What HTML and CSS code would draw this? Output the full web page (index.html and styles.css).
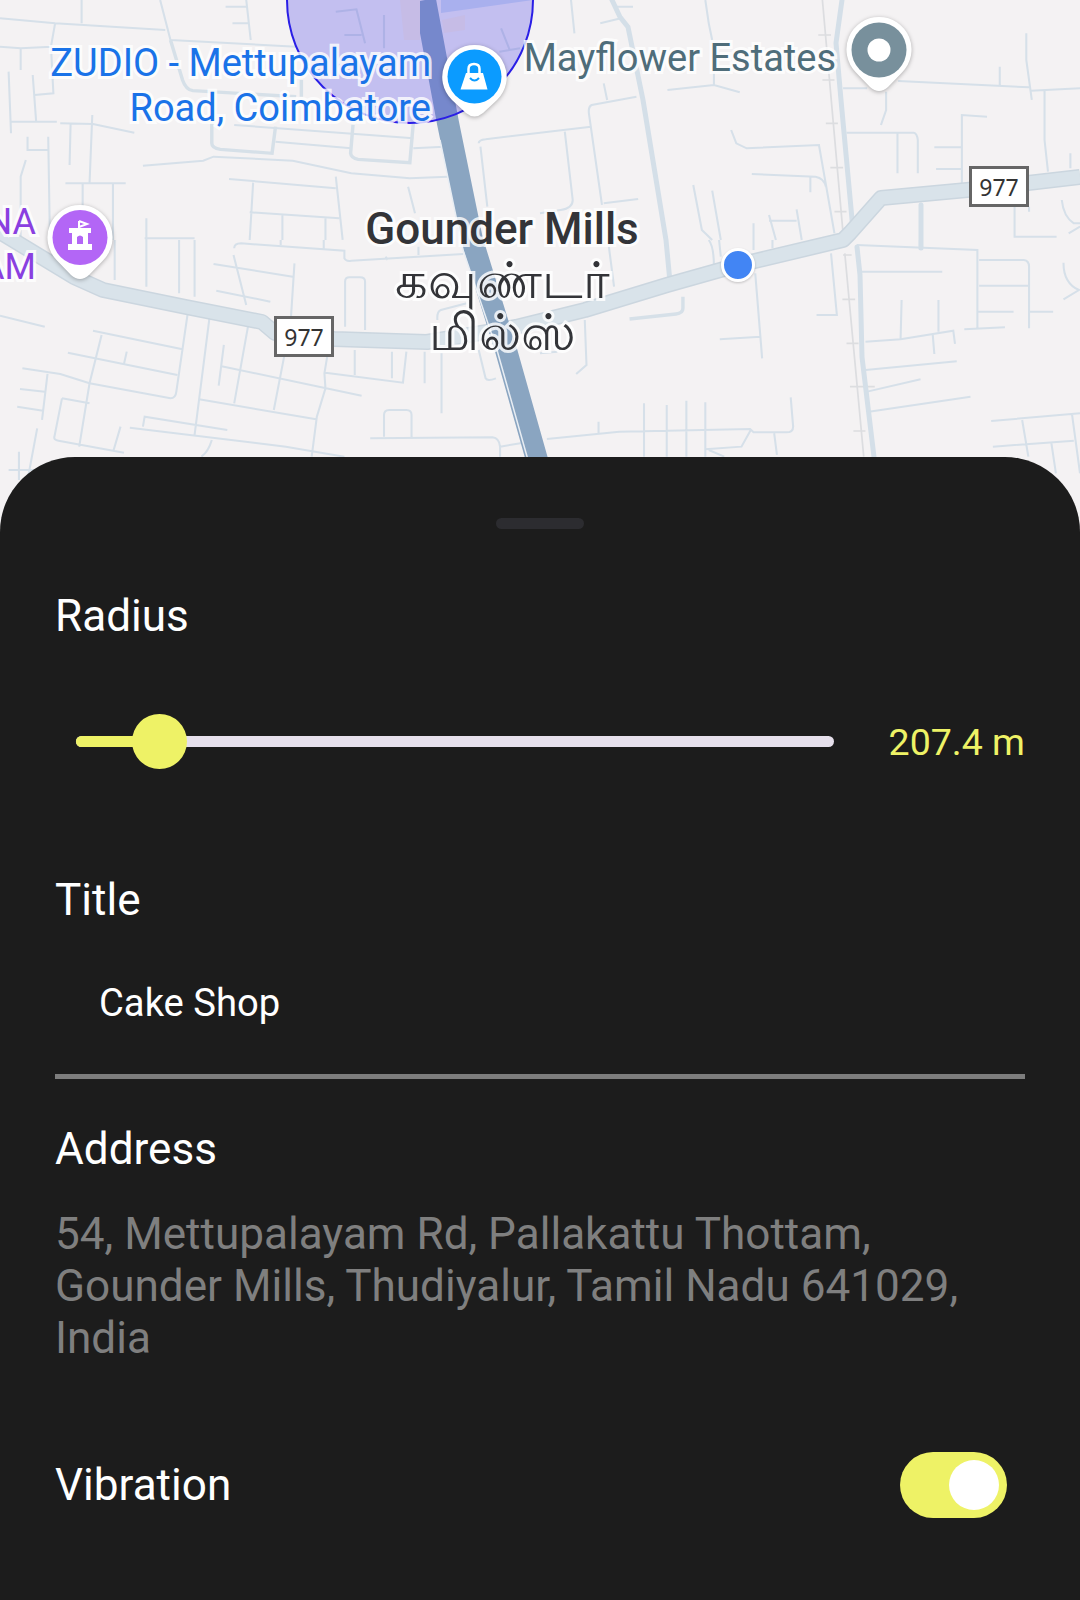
FILE: index.html
```html
<!DOCTYPE html>
<html lang="en">
<head>
<meta charset="utf-8">
<title>Geofence</title>
<link rel="stylesheet" href="styles.css">
</head>
<body>
<main class="app">
  <section class="map">
    <svg class="map-art" viewBox="0 0 1080 540" width="1080" height="540" aria-hidden="true">
      <g transform="scale(.3444 .3333)" class="minor">
        <path d="M0 55L160 70L480 90M237 0V70M160 70L148 140L155 280L100 285M0 140L60 145L150 140M60 145V210M25 215L32 400M95 225L105 365M30 365H165M175 370L270 372L390 398M268 345L260 550M205 372L202 495M80 410V450H140M140 410L145 720M75 480L60 530V720M190 550H365M240 550V620M328 550V720M465 0L495 120M495 120L860 140M655 20H715M675 70H720M715 0L728 120M680 375L1200 415M800 425L1020 445M415 497L590 482L620 470L850 482L1020 520L1190 535L1300 530M1200 445L1290 440M665 537L975 565M735 548L725 720M725 637L985 655M975 530L995 720M820 645V720M945 655V720M425 655V720M1185 560L1205 640M1390 430Q1390 420 1410 418L1568 398M1395 440L1415 620M420 715H565"/>
        <path class="wide" d="M495 120L530 240Q540 270 560 272L860 290M875 240V290M615 370V430Q615 445 640 448L790 460L800 380M1025 375L1018 460Q1020 475 1040 478L1190 488L1200 370"/>
      </g>
      <g transform="translate(540 0) scale(.3444 .3333)" class="minor">
        <path d="M90 0L100 100M175 70L235 55M270 20H215M480 0L490 70L500 120M370 270L505 255L580 277M505 220V255M185 250L195 300M280 290L150 315Q140 320 142 340L180 615M0 398L148 380M72 395L95 600Q95 625 60 630L0 640M185 610L285 597M555 390L570 430L600 445L810 435L855 700M615 522L800 530Q825 535 830 560M785 530V577M445 555L470 690L500 720M500 572L525 720M620 670V720M665 645L685 720M665 662H745M745 628L760 720M880 265H950M1040 243L1420 262M1335 200V260M1412 100V180L1428 300M1425 272L1568 265M1465 272V420L1475 515M1005 275V330L990 375M890 398H1085Q1095 400 1097 420V520M1038 400V520M1298 350L1225 345V550M1145 442H1225M1150 507H1228M1540 460V505M1378 620V710L1500 710M1420 620V635M1515 600Q1520 650 1550 670L1568 670M1535 700L1568 680"/>
        <path class="rail" d="M820 0L880 700M808 105H845M820 240H855M830 370H865M843 503H880M855 635H890"/>
      </g>
      <g transform="translate(0 240) scale(.3444 .3333)" class="minor">
        <path d="M0 227L130 260M270 272L530 328M295 285L260 430L230 620M197 338L515 405M368 335L360 372M65 385L175 402L260 430L495 475Q510 475 512 455L545 220M58 447L130 455M50 500L125 512M138 402L122 540M180 475L260 490M180 475L158 590Q155 600 170 602L360 638M350 560L330 630M108 565L80 720M55 635V720M25 690H100M608 235L565 585M377 563L830 620L1000 650M615 600Q605 635 585 650M415 560L420 530L660 570M650 315L635 437M640 378L1050 467M720 260L680 490M825 350L795 510M578 478L918 538M950 350L942 400L945 445L920 530L905 650M945 398L1170 428L1180 335M1030 330V405M1138 335V415M1233 335V430M1282 340V520M1115 590V525Q1115 510 1130 510H1180Q1195 510 1195 525V595M1075 595L1430 592Q1450 595 1452 620V650M1452 620L1520 608M620 72L850 110M855 70L845 230M678 45L715 195M628 152L785 185M1002 260V125Q1002 112 1015 112H1045Q1060 112 1060 125V270M425 0V140M520 0V160M565 0V170M333 0V120M680 25Q680 10 700 10L1000 32V55Q1005 65 1020 62L1345 42M815 0V15M940 0V25M1120 50L1125 60M1215 20V45M1355 190L1280 210Q1268 215 1270 240M1390 330L1410 415Q1415 425 1440 415"/>
      </g>
      <g transform="translate(540 240) scale(.3444 .3333)" class="minor">
        <path d="M200 20L215 140M490 0Q505 20 505 80M520 0L525 50M620 0V30M675 0V25M130 240L135 375L105 402M0 340L50 335M625 100L645 355M522 298L640 290M845 40L862 225H803M930 95H1168M920 15L1270 30V265M1275 60H1405Q1420 62 1420 80V265M1275 137H1420M1270 215H1375M1232 268L1350 262M1420 215H1490M1050 180L1047 298M1157 180V275M945 305L1047 298L1200 272L1205 312M1140 280L1145 342M945 390L1210 364M950 455L1105 418M955 515L1250 470M1520 68Q1520 130 1565 150L1520 178M1310 543L1568 520M1400 540L1418 650M1315 620L1550 602M1485 610L1498 700M1545 525L1568 700M170 545V580M20 597L230 575L610 567L620 577H715Q735 577 735 560L728 472M302 490V650M368 495V650M425 482V650M480 487V650M480 628L585 620L612 570M680 580L688 645M490 630L535 650"/>
        <path class="wide" d="M415 170V205Q415 220 395 222L260 237M1105 0V30"/>
        <path class="rail" d="M885 40L940 650M880 45H905M878 178H915M890 310H925M900 440H972M910 573H945"/>
      </g>
      <path class="secondary" d="M612 0L620 17L628 27L643 100L666 240L670 282"/>
      <path class="secondary" d="M842 0L836 43L841 100L853 230M857 247L860 275L862 357L874 457"/>
      <path class="secondary" d="M921 205V248"/>
      <path class="primary-edge" d="M-10 226L74 277L103 290L186 307L262 322L275 333L334 339L427 342L516 327L585 310L667 285L738 265L843 240L850 233L881 198L967 190L1080 177"/>
      <path class="primary" d="M-10 226L74 277L103 290L186 307L262 322L275 333L334 339L427 342L516 327L585 310L667 285L738 265L843 240L850 233L881 198L967 190L1080 177"/>
      <path class="highway" d="M425 0L448 123L472 240L506 350L537 460"/>
      <path class="highway-line" d="M440 140L463 250L497 350L528 460"/>
      <circle class="fence" cx="410" cy="0" r="123"/>
      <path class="patch" d="M400 0H420V40H404ZM442 20L465 15V30L444 33Z"/>
      <g class="minor faded" transform="scale(.3444 .3333)">
        <path d="M975 35L1035 28L1060 130M1000 105H1050M1115 45V145M1455 85L1480 150M1450 155L1510 145"/>
      </g>
      <path class="band" d="M441 13L533 0H441Z"/>

      <g class="pin">
        <path d="M474.500 45A32 32 0 0 1 497 100L483 113Q474.500 120 466 113L452 100A32 32 0 0 1 474.500 45Z" class="pin-body"/>
        <circle cx="474.500" cy="76.500" r="27" fill="#0b9bff"/>
        <path d="M466 73H483L487.500 89.500H460.500Z" fill="#fff"/>
        <path d="M468.500 73V69Q468.500 64 474 64Q479.500 64 479.500 69V73" fill="none" stroke="#fff" stroke-width="2.500"/>
        <path d="M470 78Q474.500 83 479 78" fill="none" stroke="#0b9bff" stroke-width="2"/>
      </g>
      <g class="pin">
        <path d="M879 17A32.500 32.500 0 0 1 902 72.500L888 87Q879 95 870 87L856 72.500A32.500 32.500 0 0 1 879 17Z" class="pin-body"/>
        <circle cx="879" cy="50" r="27.500" fill="#78909c"/>
        <circle cx="879" cy="50" r="11.500" fill="#fff"/>
      </g>
      <g class="pin">
        <path d="M80 205A32.500 32.500 0 0 1 103 260.500L89 275Q80 283 71 275L57 260.500A32.500 32.500 0 0 1 80 205Z" class="pin-body"/>
        <circle cx="80" cy="237.500" r="27.500" fill="#b366f6"/>
        <path d="M79 221V228M79 221L87 224L79 227" fill="none" stroke="#fff" stroke-width="2"/>
        <path d="M69 228H91V233H88V244H92V250H68V244H72V233H69ZM77 244H83V237Q80 234 77 237Z" fill="#fff" fill-rule="evenodd"/>
      </g>
      <circle class="dot" cx="738" cy="265" r="15.500"/>
    </svg>

    <div class="label label-zudio">ZUDIO - Mettupalayam<br>Road, Coimbatore</div>
    <div class="label label-mayflower">Mayflower Estates</div>
    <div class="label label-locality">Gounder Mills<span class="label-tamil">கவுண்டர்<br>மில்ஸ்</span></div>
    <div class="label label-temple">ANA<br>AM</div>
    <div class="shield shield-east">977</div>
    <div class="shield shield-west">977</div>
  </section>

  <section class="sheet">
    <div class="handle"></div>
    <h2 class="field-label radius-label">Radius</h2>
    <div class="slider-row">
      <div class="slider">
        <div class="slider-track"><div class="slider-fill"></div></div>
        <div class="slider-thumb"></div>
      </div>
      <span class="slider-value">207.4 m</span>
    </div>
    <h2 class="field-label title-label">Title</h2>
    <div class="input">Cake Shop</div>
    <h2 class="field-label address-label">Address</h2>
    <p class="address">54, Mettupalayam Rd, Pallakattu Thottam, Gounder Mills, Thudiyalur, Tamil Nadu 641029, India</p>
    <div class="switch-row">
      <h2 class="field-label">Vibration</h2>
      <div class="switch"><div class="switch-thumb"></div></div>
    </div>
  </section>
</main>
</body>
</html>
```
FILE: styles.css
```css
* { box-sizing: border-box; }
html, body { margin: 0; padding: 0; }
body { width: 1080px; height: 1600px; overflow: hidden; background: #1c1c1c; font-family: Roboto, "Noto Sans", sans-serif; }
.app { display: flex; flex-direction: column; width: 1080px; height: 1600px; overflow: hidden; }

.map { position: relative; height: 540px; flex: none; background: #f4f2f3; overflow: hidden; }
.map-art { display: block; }
.minor path { fill: none; stroke: #d6e0e9; stroke-width: 6; }
.minor .wide { stroke-width: 10; stroke: #d6e0e8; }
.minor .rail { stroke: #dcdde0; stroke-width: 5; }
.minor.faded path { stroke: #aeb2e6; }
.secondary { fill: none; stroke: #d4dfe8; stroke-width: 5; stroke-linecap: round; }
.primary-edge { fill: none; stroke: #cbd6df; stroke-width: 16; stroke-linejoin: round; }
.primary { fill: none; stroke: #d9e3ea; stroke-width: 13; stroke-linejoin: round; }
.highway { fill: none; stroke: #8aa5c1; stroke-width: 22; }
.highway-line { fill: none; stroke: #e8edf3; stroke-width: 1.500; }
.fence { fill: rgba(70, 60, 235, .28); stroke: #2a1ee6; stroke-width: 2; }
.patch { fill: #c6bce6; }
.band { fill: #a9b0ee; }
.pin { filter: drop-shadow(0 1px 2px rgba(0, 0, 0, .3)); }
.pin-body { fill: #fff; }
.dot { fill: #4285f4; stroke: #fff; stroke-width: 3; filter: drop-shadow(0 1px 1px rgba(0, 0, 0, .2)); }

.label { position: absolute; font-family: Roboto, sans-serif; -webkit-text-stroke: 6px rgba(255, 255, 255, .8); paint-order: stroke fill; }
.label-zudio { right: 649px; top: 41px; font-size: 38px; line-height: 45px; text-align: right; color: #1a73e8; white-space: nowrap; }
.label-mayflower { right: 244px; top: 36px; font-size: 38px; line-height: 45px; color: #4f6d7a; white-space: nowrap; }
.label-locality { left: 302px; width: 400px; top: 204px; font-size: 44px; line-height: 50px; font-weight: 500; color: #333438; text-align: center; }
.label-tamil { display: block; margin-top: -2px; font-family: "Noto Sans", Roboto, sans-serif; font-weight: 400; font-size: 51px; line-height: 52px; }
.label-temple { right: 1044px; top: 200px; font-size: 36px; line-height: 45px; color: #8a3fe0; text-align: right; }

.shield { position: absolute; width: 60px; height: 41px; border: 3px solid #666; background: #fff; display: flex; align-items: center; justify-content: center; font-family: "Noto Sans", sans-serif; font-size: 23px; color: #333; }
.shield-east { left: 969px; top: 166px; }
.shield-west { left: 274px; top: 316px; }

.sheet { position: relative; flex: 1; margin-top: -83px; background: #1c1c1c; border-radius: 75px 75px 0 0; padding: 61px 55px 0; color: #fff; }
.handle { width: 88px; height: 11px; margin: 0 auto; border-radius: 6px; background: #2c2c30; }
.field-label { margin: 0; font-size: 44.1px; line-height: 52px; font-weight: 400; color: #fff; }
.radius-label { margin-top: 61px; }

.slider-row { display: flex; align-items: center; margin-top: 72px; height: 55px; }
.slider { position: relative; width: 758px; height: 55px; margin-left: 21px; display: flex; align-items: center; }
.slider-track { width: 100%; height: 11px; border-radius: 6px; background: #e6e0ec; overflow: hidden; }
.slider-fill { width: 80px; height: 100%; background: #eef266; }
.slider-thumb { position: absolute; left: 56px; top: 0; width: 55px; height: 55px; border-radius: 50%; background: #eef266; }
.slider-value { margin-left: auto; font-size: 37.5px; color: #eef266; }

.title-label { margin-top: 105px; }
.input { margin-top: 55px; padding: 0 0 49px 44px; font-size: 38.2px; line-height: 44px; border-bottom: 5px solid #7d7d7d; }
.address-label { margin-top: 44px; }
.address { margin: 33px 0 0; font-size: 44.1px; line-height: 52px; color: #7f7f7f; }
.switch-row { display: flex; align-items: center; justify-content: space-between; margin-top: 63px; padding-right: 18px; }
.switch-row .field-label { margin-top: 25px; }
.switch { position: relative; width: 107px; height: 66px; margin-top: 25px; border-radius: 33px; background: #eef266; }
.switch-thumb { position: absolute; right: 8px; top: 8px; width: 50px; height: 50px; border-radius: 50%; background: #fff; }
```
